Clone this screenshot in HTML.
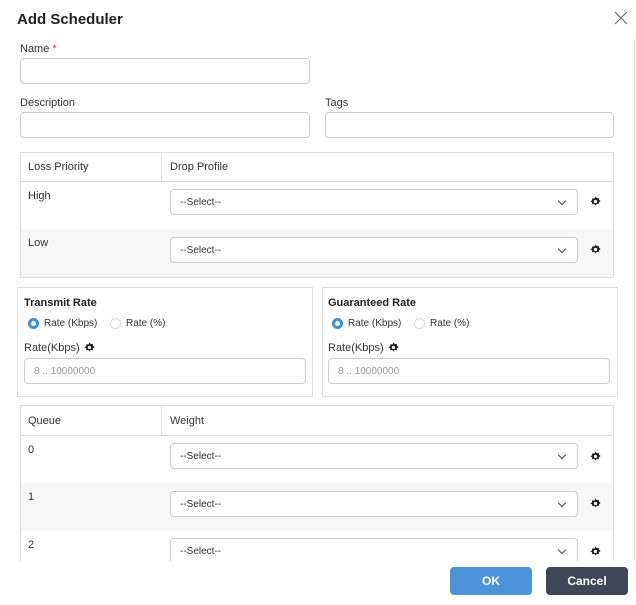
<!DOCTYPE html>
<html><head><style>
*{box-sizing:border-box;margin:0;padding:0}
body{width:636px;height:605px;overflow:hidden;background:#fff;font-family:"Liberation Sans",sans-serif;color:#333;font-size:11px;position:relative}
.a{position:absolute}
.inp{position:absolute;border:1px solid #ccc;border-radius:4px;background:#fff}
.lbl{position:absolute;font-size:11px;color:#333}
.sel{position:absolute;left:170px;width:408px;height:26px;border:1px solid #ccc;border-radius:4px;background:#fff;font-size:10px;padding:7px 9px;color:#333}
.sel:after{content:"";position:absolute;right:12px;top:8px;width:5px;height:5px;border-right:1.2px solid #444;border-bottom:1.2px solid #444;transform:rotate(45deg)}
.gear{position:absolute;left:590px;width:11px;height:11px}
.box{position:absolute;border:1px solid #ddd}
</style></head><body>
<div class="a" style="left:17px;top:11px;font-size:15px;font-weight:bold;color:#222">Add Scheduler</div>
<svg class="a" style="left:613px;top:10px" width="16" height="16"><path d="M2 2L14 14M14 2L2 14" stroke="#666" stroke-width="1.1"/></svg>
<div class="a" style="left:634px;top:38px;width:1px;height:530px;background:#ddd"></div>

<div class="lbl" style="left:20px;top:43px">Name <span style="color:#e04040">*</span></div>
<div class="inp" style="left:20px;top:58px;width:290px;height:26px"></div>
<div class="lbl" style="left:20px;top:97px">Description</div>
<div class="inp" style="left:20px;top:112px;width:290px;height:26px"></div>
<div class="lbl" style="left:325px;top:97px">Tags</div>
<div class="inp" style="left:325px;top:112px;width:289px;height:26px"></div>

<div class="box" style="left:20px;top:152px;width:594px;height:126px"></div>
<div class="a" style="left:21px;top:181px;width:592px;height:1px;background:#ddd"></div>
<div class="a" style="left:161px;top:153px;width:1px;height:28px;background:#ddd"></div>
<div class="a" style="left:21px;top:229px;width:592px;height:48px;background:#f7f7f7"></div>
<div class="lbl" style="left:28px;top:161px">Loss Priority</div>
<div class="lbl" style="left:170px;top:161px">Drop Profile</div>
<div class="lbl" style="left:28px;top:190px">High</div>
<div class="lbl" style="left:28px;top:237px">Low</div>
<div class="sel" style="top:189px">--Select--</div>
<div class="sel" style="top:237px">--Select--</div>

<div class="box" style="left:17px;top:287px;width:296px;height:110px"></div>
<div class="box" style="left:322px;top:287px;width:296px;height:110px"></div>
<div class="a" style="left:24px;top:297px;font-weight:bold;font-size:11px;color:#222">Transmit Rate</div>
<div class="a" style="left:328px;top:297px;font-weight:bold;font-size:11px;color:#222">Guaranteed Rate</div>

<div class="a" style="left:28px;top:318px;width:11px;height:11px;border-radius:50%;border:3px solid #3a8ee0"></div>
<div class="lbl" style="left:44px;top:318px;font-size:10px">Rate (Kbps)</div>
<div class="a" style="left:110px;top:318px;width:11px;height:11px;border-radius:50%;border:1px solid #ddd"></div>
<div class="lbl" style="left:126px;top:318px;font-size:10px">Rate (%)</div>
<div class="lbl" style="left:24px;top:342px">Rate(Kbps)</div>
<div class="inp" style="left:24px;top:358px;width:282px;height:26px;font-size:10px;color:#999;padding:7px 9px">8 .. 10000000</div>

<div class="a" style="left:332px;top:318px;width:11px;height:11px;border-radius:50%;border:3px solid #3a8ee0"></div>
<div class="lbl" style="left:348px;top:318px;font-size:10px">Rate (Kbps)</div>
<div class="a" style="left:414px;top:318px;width:11px;height:11px;border-radius:50%;border:1px solid #ddd"></div>
<div class="lbl" style="left:430px;top:318px;font-size:10px">Rate (%)</div>
<div class="lbl" style="left:328px;top:342px">Rate(Kbps)</div>
<div class="inp" style="left:328px;top:358px;width:282px;height:26px;font-size:10px;color:#999;padding:7px 9px">8 .. 10000000</div>

<div class="box" style="left:20px;top:405px;width:594px;height:200px"></div>
<div class="a" style="left:21px;top:435px;width:592px;height:1px;background:#ddd"></div>
<div class="a" style="left:161px;top:406px;width:1px;height:29px;background:#ddd"></div>
<div class="a" style="left:21px;top:483px;width:592px;height:48px;background:#f7f7f7"></div>
<div class="lbl" style="left:28px;top:415px">Queue</div>
<div class="lbl" style="left:170px;top:415px">Weight</div>
<div class="lbl" style="left:28px;top:444px">0</div>
<div class="lbl" style="left:28px;top:491px">1</div>
<div class="lbl" style="left:28px;top:539px">2</div>
<div class="sel" style="top:443px">--Select--</div>
<div class="sel" style="top:491px">--Select--</div>
<div class="sel" style="top:538px">--Select--</div>

<svg width="0" height="0" style="position:absolute"><defs><g id="g"><path d="M5.5 0.5l1.2 1.6 2-.3.3 2 1.6 1.2-1.6 1.2-.3 2-2-.3-1.2 1.6-1.2-1.6-2 .3-.3-2L.4 5.5 2 4.3l.3-2 2 .3z" fill="#222"/><circle cx="5.5" cy="5.5" r="1.6" fill="#fff"/></g></defs></svg>
<svg class="gear" style="top:196px" viewBox="0 0 11 11"><use href="#g"/></svg>
<svg class="gear" style="top:244px" viewBox="0 0 11 11"><use href="#g"/></svg>
<svg class="gear" style="top:451px" viewBox="0 0 11 11"><use href="#g"/></svg>
<svg class="gear" style="top:498px" viewBox="0 0 11 11"><use href="#g"/></svg>
<svg class="gear" style="top:546px" viewBox="0 0 11 11"><use href="#g"/></svg>
<svg class="a" style="left:84px;top:342px" width="11" height="11" viewBox="0 0 11 11"><use href="#g"/></svg>
<svg class="a" style="left:388px;top:342px" width="11" height="11" viewBox="0 0 11 11"><use href="#g"/></svg>

<div class="a" style="left:0;top:561px;width:636px;height:44px;background:#fff"></div>
<div class="a" style="left:450px;top:567px;width:82px;height:28px;background:#4d93d9;border-radius:4px;color:#fff;font-weight:bold;font-size:12px;text-align:center;line-height:28px">OK</div>
<div class="a" style="left:546px;top:567px;width:82px;height:28px;background:#3d4757;border-radius:4px;color:#fff;font-weight:bold;font-size:12px;text-align:center;line-height:28px">Cancel</div>
</body></html>
